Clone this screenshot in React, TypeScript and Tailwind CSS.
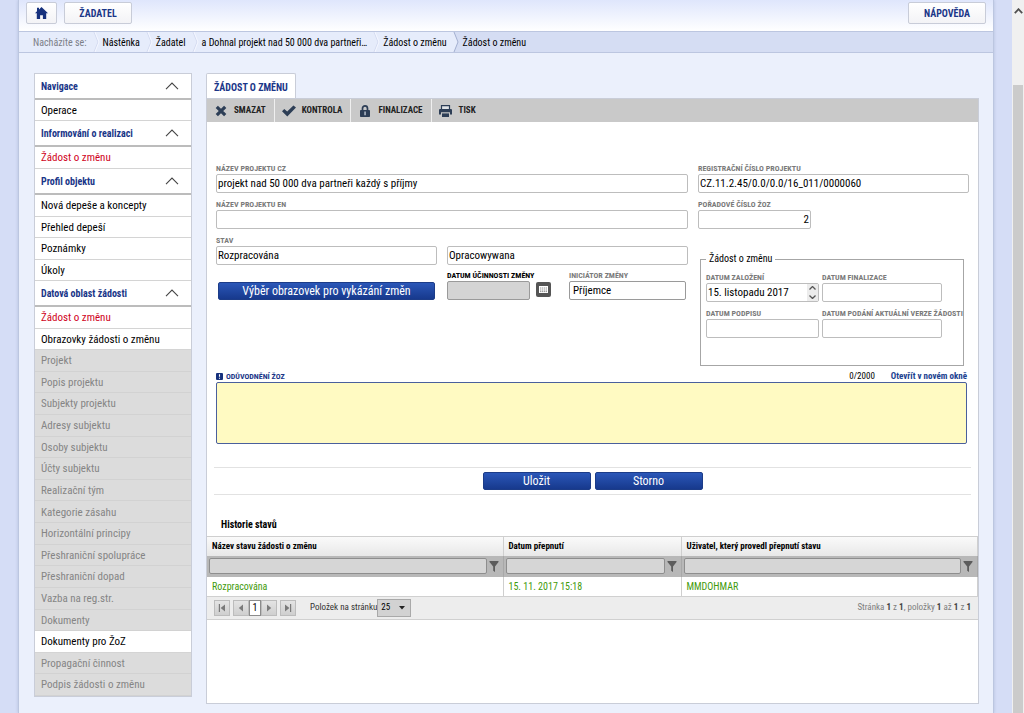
import { useId } from "react";
import type { ReactNode } from "react";
import { clsx } from "clsx";

type Item = { label: string; state?: "active" | "disabled" };
type Section = { title: string; listClass: string; items: Item[] };

const sections: Section[] = [
  { title: "Navigace", listClass: "h-[21px]", items: [{ label: "Operace" }] },
  {
    title: "Informování o realizaci",
    listClass: "h-[22px]",
    items: [{ label: "Žádost o změnu", state: "active" }],
  },
  {
    title: "Profil objektu",
    listClass: "h-[86px]",
    items: [
      { label: "Nová depeše a koncepty" },
      { label: "Přehled depeší" },
      { label: "Poznámky" },
      { label: "Úkoly" },
    ],
  },
  {
    title: "Datová oblast žádosti",
    listClass: "h-[389px]",
    items: [
      { label: "Žádost o změnu", state: "active" },
      { label: "Obrazovky žádosti o změnu" },
      { label: "Projekt", state: "disabled" },
      { label: "Popis projektu", state: "disabled" },
      { label: "Subjekty projektu", state: "disabled" },
      { label: "Adresy subjektu", state: "disabled" },
      { label: "Osoby subjektu", state: "disabled" },
      { label: "Účty subjektu", state: "disabled" },
      { label: "Realizační tým", state: "disabled" },
      { label: "Kategorie zásahu", state: "disabled" },
      { label: "Horizontální principy", state: "disabled" },
      { label: "Přeshraniční spolupráce", state: "disabled" },
      { label: "Přeshraniční dopad", state: "disabled" },
      { label: "Vazba na reg.str.", state: "disabled" },
      { label: "Dokumenty", state: "disabled" },
      { label: "Dokumenty pro ŽoZ" },
      { label: "Propagační činnost", state: "disabled" },
      { label: "Podpis žádosti o změnu", state: "disabled" },
    ],
  },
];

const crumbs = ["Nástěnka", "Žadatel", "a Dohnal projekt nad 50 000 dva partneři…", "Žádost o změnu"];

const inputBase = "block h-[19px] w-full rounded-[2px] border px-px text-[11px] text-black outline-none";
const inputNormal = "border-[#bdbdbd] bg-white";

const topButton =
  "flex h-[22px] items-center justify-center rounded-[2px] border border-[#c8ccd8] bg-linear-to-b from-white to-[#f3f3f6] text-[10px] font-bold text-[#1a3688]";

function HomeIcon() {
  return (
    <svg width="13" height="12" viewBox="0 0 13 12" fill="#16317d" aria-hidden="true">
      <path d="M6.5 0 13 6.2h-1.8V12H7.9V8.2H5.1V12H1.8V6.2H0L2 4.3V.8h2v1.6z" />
    </svg>
  );
}

function CrossIcon() {
  return (
    <svg width="12" height="12" viewBox="0 0 12 12" stroke="#2d3e56" strokeWidth="3.2" aria-hidden="true">
      <path d="m1.8 1.8 8.4 8.4M10.2 1.8l-8.4 8.4" />
    </svg>
  );
}

function CheckIcon() {
  return (
    <svg width="14" height="12" viewBox="0 0 14 12" fill="#2d3e56" aria-hidden="true">
      <path d="M0 6.2 2.3 4l2.9 2.6L11.4.4 14 2.6 5.3 11.4z" />
    </svg>
  );
}

function LockIcon() {
  return (
    <svg width="10" height="12" viewBox="0 0 10 12" aria-hidden="true">
      <path d="M2.5 5.5V3.4a2.5 2.5 0 0 1 5 0v2.1" fill="none" stroke="#2d3e56" strokeWidth="1.7" />
      <rect y="5" width="10" height="7" rx="0.8" fill="#2d3e56" />
      <path d="M4.4 6.5h1.3v3.8H4.4z" fill="#c9d2dd" />
    </svg>
  );
}

function PrintIcon() {
  return (
    <svg width="13" height="12" viewBox="0 0 13 12" aria-hidden="true">
      <path d="M2.5 4V.7h8V4" fill="#dfe3e7" stroke="#2d3e56" strokeWidth="1.2" />
      <path d="M1 4h11a1 1 0 0 1 1 1v4.5h-2V7.2H2v2.3H0V5a1 1 0 0 1 1-1z" fill="#2d3e56" />
      <path d="M3 8.4h7V12H3z" fill="#2d3e56" />
    </svg>
  );
}

function FunnelIcon() {
  return (
    <svg width="10" height="11" viewBox="0 0 10 11" fill="#5c5c5c" aria-hidden="true">
      <path d="M.5 0h9v1L6 5.4V11L4.2 9.8V5.4L.5 1z" />
    </svg>
  );
}

function CalendarIcon() {
  return (
    <svg width="15" height="15" viewBox="0 0 15 15" aria-hidden="true">
      <rect width="15" height="15" rx="2" fill="#555" />
      <rect x="3" y="4" width="9" height="7" fill="#fff" />
      <path d="M4 6h7M4 8h7M4 9.6h7" stroke="#777" strokeWidth="0.8" strokeDasharray="1.4 0.6" />
    </svg>
  );
}

function Chevron() {
  return (
    <svg width="14" height="8" viewBox="0 0 14 8" fill="none" stroke="#444" strokeWidth="1.1" aria-hidden="true">
      <path d="M1 7.2 7 1l6 6.2" />
    </svg>
  );
}

function CrumbArrow({ strong }: { strong?: boolean }) {
  return (
    <svg
      width="8"
      height="20"
      viewBox="0 0 8 20"
      className={clsx("shrink-0", strong && "bg-[#e6ecfb]")}
      aria-hidden="true"
    >
      {strong && <path d="M1 0h7v20H1l4-10z" fill="#d5ddf3" />}
      <path d="m1 0 4 10-4 10" fill="none" stroke={strong ? "#a3b0d0" : "#d3dbf0"} />
      {!strong && <path d="m2 0 4 10-4 10" fill="none" stroke="#f4f7ff" />}
    </svg>
  );
}

type FieldProps = {
  label: string;
  value?: string;
  className?: string;
  inputClass?: string;
  dark?: boolean;
  children?: ReactNode;
};

function Field({ label, value = "", className, inputClass = inputNormal, dark, children }: FieldProps) {
  const id = useId();
  return (
    <div className={className}>
      <label
        htmlFor={id}
        className={clsx(
          "block h-[11px] text-[8px] leading-[11px] font-bold whitespace-nowrap uppercase",
          dark ? "text-black" : "text-[#7a7a7a]",
        )}
      >
        {label}
      </label>
      <div className="relative flex items-center">
        <input id={id} type="text" defaultValue={value} className={clsx(inputBase, inputClass)} />
        {children}
      </div>
    </div>
  );
}

function PrimaryButton({ children, className }: { children: ReactNode; className?: string }) {
  return (
    <button
      type="button"
      className={clsx(
        "h-[18px] rounded-[2px] border border-[#1c3c88] bg-linear-to-b from-[#2b57b8] to-[#17398d] text-xs leading-4 text-white",
        className,
      )}
    >
      {children}
    </button>
  );
}

function Tool({ icon, label, last }: { icon: ReactNode; label: string; last?: boolean }) {
  return (
    <button
      type="button"
      className={clsx(
        "flex h-[23px] items-center gap-1.5 pr-2 pl-[7px] text-[9px] font-bold text-[#222]",
        !last && "border-r border-[#efefef]",
      )}
    >
      <span className="flex w-[14px] justify-center">{icon}</span>
      {label}
    </button>
  );
}

function Sidebar() {
  return (
    <nav className="w-[158px] shrink-0 border border-[#c9cdd8] bg-white">
      {sections.map(section => (
        <section key={section.title}>
          <h2 className="flex h-[26px] items-center justify-between border-b-2 border-[#bcbcbc] pr-3 pl-1.5 text-[10px] font-bold text-[#1a3688]">
            {section.title}
            <Chevron />
          </h2>
          <ul className={clsx("flex flex-col", section.listClass)}>
            {section.items.map(item => (
              <li
                key={item.label}
                className={clsx(
                  "flex flex-1 items-center border-b pt-0.5 pl-1.5 text-[11px]",
                  item.state === "disabled"
                    ? "border-[#d2d2d2] bg-[#dcdcdc] text-[#858585]"
                    : "border-[#d4d4d4]",
                  item.state === "active" && "text-[#d0021b]",
                )}
              >
                <a href="#">{item.label}</a>
              </li>
            ))}
          </ul>
        </section>
      ))}
    </nav>
  );
}

function PagerButton({ label, d }: { label: string; d: string }) {
  return (
    <button
      type="button"
      aria-label={label}
      className="flex h-4 w-4 items-center justify-center border border-[#bcbcbc] bg-linear-to-b from-[#e4e4e4] to-[#cfcfcf]"
    >
      <svg width="8" height="8" viewBox="0 0 8 8" fill="#7a7a7a" aria-hidden="true">
        <path d={d} />
      </svg>
    </button>
  );
}

function History() {
  return (
    <div>
      <h3 className="mt-[22px] mb-[3px] pl-3.5 text-[10px] leading-4 font-bold">Historie stavů</h3>
      <table className="w-full table-fixed border-collapse text-left">
        <colgroup>
          <col className="w-[296px]" />
          <col className="w-[178px]" />
          <col />
        </colgroup>
        <thead>
          <tr className="h-[19px] bg-linear-to-b from-[#fafafa] to-[#e8e8e8] text-[9px]">
            {["Název stavu žádosti o změnu", "Datum přepnutí", "Uživatel, který provedl přepnutí stavu"].map(h => (
              <th key={h} className="border-t border-r border-[#cfcfcf] p-0 pl-[5px] font-bold">{h}</th>
            ))}
          </tr>
          <tr className="h-[21px] bg-[#b8b8b8]">
            {["název stavu", "datum", "uživatel"].map(h => (
              <td key={h} className="border-r border-[#a8a8a8] p-0">
                <div className="flex items-center gap-0.5 pr-1 pl-0.5">
                  <input
                    type="text"
                    aria-label={`Filtr: ${h}`}
                    className="h-4 min-w-0 flex-1 rounded-[2px] border border-[#8e8e8e] bg-[#d6d6d6] px-1 text-[10px]"
                  />
                  <FunnelIcon />
                </div>
              </td>
            ))}
          </tr>
        </thead>
        <tbody>
          <tr className="h-[19px] text-[10px] text-[#3f9a0c]">
            <td className="border-r border-[#cfcfcf] p-0 pl-[5px]">Rozpracována</td>
            <td className="border-r border-[#cfcfcf] p-0 pl-[5px]">15. 11. 2017 15:18</td>
            <td className="border-r border-[#cfcfcf] p-0 pl-[5px]">MMDOHMAR</td>
          </tr>
        </tbody>
      </table>
      <div className="flex h-6 items-center border-y border-[#d0d0d0] bg-[#ededed] px-[7px] text-[9px] text-[#333]">
        <PagerButton label="První stránka" d="M.8 0H2v8H.8zM7 .5v7L2.6 4z" />
        <div className="mx-[3px] flex items-center">
          <PagerButton label="Předchozí stránka" d="M6 .5v7L1.8 4z" />
          <button type="button" className="h-4 w-3 border border-[#8c8c8c] bg-white text-[10px] leading-3 text-black">
            1
          </button>
          <PagerButton label="Další stránka" d="M2 .5v7L6.2 4z" />
        </div>
        <PagerButton label="Poslední stránka" d="M6 0h1.2v8H6zM1 .5v7L5.4 4z" />
        <label htmlFor="page-size" className="ml-[14px]">Položek na stránku</label>
        <div className="relative">
          <select
            id="page-size"
            className="block h-[18px] w-[34px] appearance-none border border-[#a9a9a9] bg-[#d2d2d2] pl-[3px] text-[9px] text-black"
          >
            <option>25</option>
          </select>
          <svg
            width="6"
            height="4"
            viewBox="0 0 6 4"
            className="pointer-events-none absolute top-[7px] right-[6px]"
            aria-hidden="true"
          >
            <path d="M0 0h6L3 3.6z" fill="#222" />
          </svg>
        </div>
        <p className="ml-auto text-[#7d7d7d]">
          Stránka <b className="text-[#444]">1</b> z <b className="text-[#444]">1</b>, položky{" "}
          <b className="text-[#444]">1</b> až <b className="text-[#444]">1</b> z <b className="text-[#444]">1</b>
        </p>
      </div>
    </div>
  );
}

function RequestForm() {
  return (
    <form className="px-[7px] pt-[41px]">
      <div className="flex gap-2.5 px-0.5">
        {/* Project and state */}
        <div className="flex min-w-0 flex-1 flex-col gap-1.5">
          <Field label="Název projektu CZ" value="projekt nad 50 000 dva partneři každý s příjmy" />
          <Field label="Název projektu EN" />
          <div className="grid grid-cols-[11fr_12fr] items-end gap-x-2.5 gap-y-[5px]">
            <Field label="Stav" value="Rozpracována" />
            <input
              type="text"
              aria-label="Stav PL"
              defaultValue="Opracowywana"
              className={clsx(inputBase, inputNormal)}
            />
            <PrimaryButton className="mx-0.5">Výběr obrazovek pro vykázání změn</PrimaryButton>
            <div className="flex justify-between">
              <div className="flex items-end gap-1.5">
                <Field
                  label="Datum účinnosti změny"
                  dark
                  className="w-[83px]"
                  inputClass="border-[#9a9a9a] bg-[#d4d4d4]"
                />
                <button type="button" aria-label="Vybrat datum" className="mb-[3px]">
                  <CalendarIcon />
                </button>
              </div>
              <Field
                label="Iniciátor změny"
                value="Příjemce"
                className="mr-0.5 w-[117px]"
                inputClass="border-[#9a9a9a] bg-white indent-0.5"
              />
            </div>
          </div>
        </div>

        {/* Registration and dates */}
        <div className="flex w-[271px] shrink-0 flex-col gap-1.5">
          <Field label="Registrační číslo projektu" value="CZ.11.2.45/0.0/0.0/16_011/0000060" />
          <Field
            label="Pořadové číslo ŽoZ"
            value="2"
            className="w-[113px]"
            inputClass="border-[#bdbdbd] bg-white text-right"
          />
          <fieldset className="mt-[17px] mr-[5px] ml-0.5 h-[114px] border border-[#a6a6a6] pl-[5px]">
            <legend className="px-[3px] text-[10px] leading-[14px] text-black">Žádost o změnu</legend>
            <div className="grid grid-cols-[113px_120px] gap-x-[3px] gap-y-1.5 pt-1.5">
              <Field label="Datum založení" value="15. listopadu 2017">
                <div className="absolute top-px right-px flex h-[17px] w-[11px] flex-col items-center justify-center gap-[5px] bg-[#ececec]">
                  <svg width="7" height="4" viewBox="0 0 7 4" fill="none" stroke="#555" strokeWidth="1.3" aria-hidden="true">
                    <path d="m.5 3.5 3-3 3 3" />
                  </svg>
                  <svg width="7" height="4" viewBox="0 0 7 4" fill="none" stroke="#555" strokeWidth="1.3" aria-hidden="true">
                    <path d="m.5.5 3 3 3-3" />
                  </svg>
                </div>
              </Field>
              <Field label="Datum finalizace" />
              <Field label="Datum podpisu" />
              <Field label="Datum podání aktuální verze žádosti" />
            </div>
          </fieldset>
        </div>
      </div>

      <div className="mt-[5px] mr-1 ml-0.5">
        <div className="flex h-[11px] items-center text-[9px] leading-[11px]">
          <svg width="7" height="7" viewBox="0 0 7 7" className="mr-[3px]" aria-hidden="true">
            <rect width="7" height="7" rx="1" fill="#16317d" />
            <path d="M3.5 1.2v2.6M3.5 4.8v1" stroke="#fff" strokeWidth="1.1" />
          </svg>
          <label htmlFor="reason" className="text-[8px] font-bold text-[#1a3688]">ODŮVODNĚNÍ ŽOZ</label>
          <span className="ml-auto">0/2000</span>
          <a href="#" className="ml-4 font-bold text-[#1a3f8f]">Otevřít v novém okně</a>
        </div>
        <textarea
          id="reason"
          className="block h-[62px] w-full resize-none rounded-[2px] border border-[#4a5f9c] bg-[#fffac2] p-1 text-[11px] outline-none"
        />
      </div>

      <div className="mt-[23px] flex justify-center gap-1 border-y border-[#e2e2e2] py-1">
        <PrimaryButton className="w-[108px]">Uložit</PrimaryButton>
        <PrimaryButton className="w-[108px]">Storno</PrimaryButton>
      </div>
    </form>
  );
}

export default function App() {
  return (
    <div className="flex min-h-screen bg-[#d5ddf6] font-['Roboto_Condensed','Liberation_Sans_Narrow',Roboto,sans-serif] text-black">
      <div className="mx-[18px] flex min-w-0 flex-1 flex-col border-x border-[#bcc6e0] bg-[#ebf0fc] shadow-[0_0_3px_#b4bfdc]">
        <header className="flex h-[31px] items-start justify-between bg-linear-to-b from-[#dfe6fc] to-white px-[7px] pt-0.5">
          <div className="flex gap-[7px]">
            <a href="#" aria-label="Domů" className={clsx(topButton, "w-[31px]")}>
              <HomeIcon />
            </a>
            <button type="button" className={clsx(topButton, "w-[68px]")}>ŽADATEL</button>
          </div>
          <button type="button" className={clsx(topButton, "w-[78px]")}>NÁPOVĚDA</button>
        </header>

        <div className="flex h-[22px] items-center border-y border-[#bcc6e0] bg-[#d5ddf3] text-[10px]">
          <div className="flex h-full items-center bg-[#e6ecfb] pl-3.5">
            <span className="mr-1.5 text-[#7c7f88]">Nacházíte se:</span>
            {crumbs.map(c => (
              <div key={c} className="flex items-center">
                <CrumbArrow />
                <a href="#" className="mr-1.5 ml-0.5 whitespace-nowrap">{c}</a>
              </div>
            ))}
          </div>
          <CrumbArrow strong />
          <span className="ml-0.5">Žádost o změnu</span>
        </div>

        <div className="flex items-start gap-[14px] pt-5 pr-[14px] pb-[9px] pl-[15px]">
          <Sidebar />
          <main className="min-w-0 flex-1">
            <div className="flex">
              <button
                type="button"
                className="h-[25px] rounded-t-[2px] border border-b-0 border-[#c9cdd8] bg-white px-[7px] pt-0.5 text-[10px] font-bold text-[#1a3688]"
              >
                ŽÁDOST O ZMĚNU
              </button>
            </div>
            <div className="border border-[#c9cdd8] bg-white pb-[83px]">
              <div className="flex bg-[#c9c9c9]">
                <Tool icon={<CrossIcon />} label="SMAZAT" />
                <Tool icon={<CheckIcon />} label="KONTROLA" />
                <Tool icon={<LockIcon />} label="FINALIZACE" />
                <Tool icon={<PrintIcon />} label="TISK" last />
              </div>
              <RequestForm />
              <History />
            </div>
          </main>
        </div>
      </div>

      {/* Scroll strip */}
      <div className="flex w-3 shrink-0 flex-col bg-[#f0f0f0] pl-px" aria-hidden="true">
        <div className="h-[85px] pt-2 pl-px">
          <svg width="9" height="6" viewBox="0 0 9 6" fill="none" stroke="#505050" strokeWidth="1.8">
            <path d="m.8 5.2 3.7-4 3.7 4" />
          </svg>
        </div>
        <div className="mr-px flex-1 bg-[#cbcbcb]" />
      </div>
    </div>
  );
}
